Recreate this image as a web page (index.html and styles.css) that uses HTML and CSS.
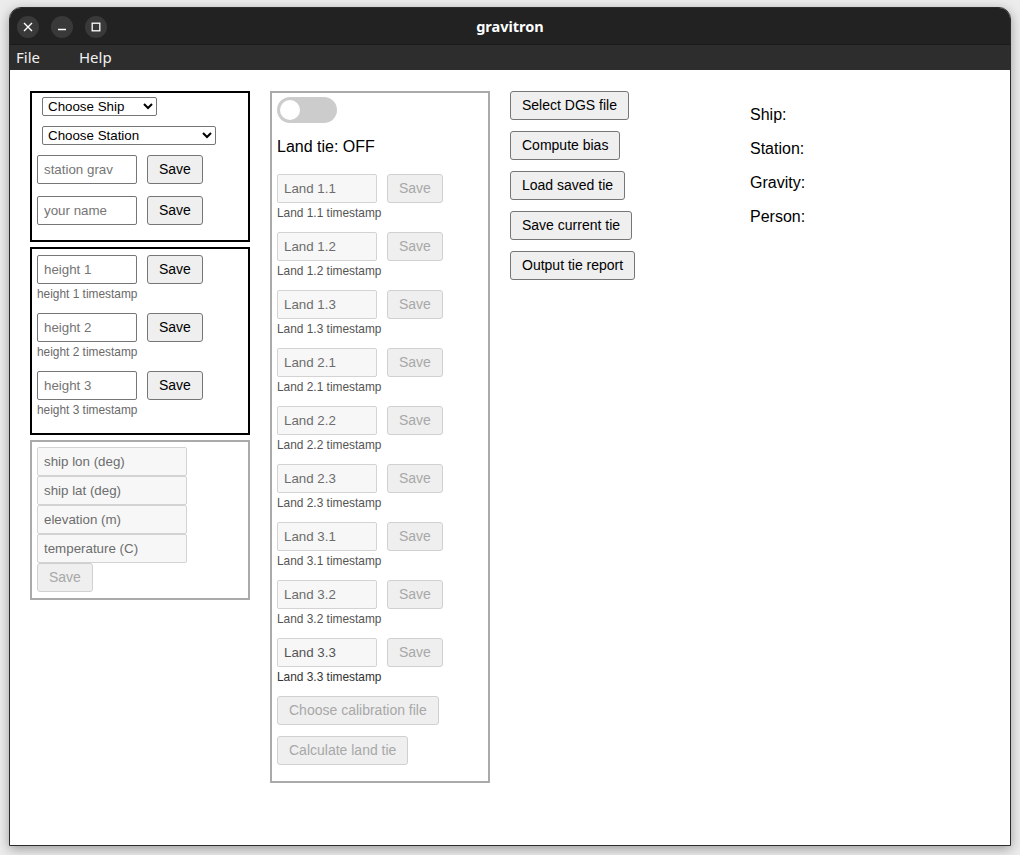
FILE: index.html
```html
<!DOCTYPE html>
<html>
<head>
<meta charset="utf-8">
<title>gravitron</title>
<link rel="stylesheet" href="styles.css">
</head>
<body>
<div class="window">
  <div class="titlebar">
    <div class="wbtns">
      <span class="wbtn"><svg width="10" height="10" viewBox="0 0 10 10"><path d="M1 1L9 9M9 1L1 9" stroke="#fff" stroke-width="1.4" fill="none"/></svg></span>
      <span class="wbtn"><svg width="10" height="10" viewBox="0 0 10 10"><path d="M1 7.5H9" stroke="#fff" stroke-width="1.4" fill="none"/></svg></span>
      <span class="wbtn"><svg width="10" height="10" viewBox="0 0 10 10"><rect x="1.2" y="1.2" width="7.6" height="7.6" stroke="#fff" stroke-width="1.3" fill="none"/></svg></span>
    </div>
    <div class="title">gravitron</div>
    <div></div>
  </div>
  <div class="menubar"><span class="menu">File</span><span class="menu">Help</span></div>
  <div class="content">
    <div class="col left">
      <div class="box dark box1">
        <select class="sel sel-ship"><option>Choose Ship</option></select>
        <select class="sel sel-station"><option>Choose Station</option></select>
        <div class="row"><input class="inp" placeholder="station grav"><button class="btn">Save</button></div>
        <div class="row row-gap"><input class="inp" placeholder="your name"><button class="btn">Save</button></div>
      </div>
      <div class="box dark box2">
        <div class="field"><div class="row"><input class="inp" placeholder="height 1"><button class="btn">Save</button></div><div class="ts">height 1 timestamp</div></div>
        <div class="field"><div class="row"><input class="inp" placeholder="height 2"><button class="btn">Save</button></div><div class="ts">height 2 timestamp</div></div>
        <div class="field"><div class="row"><input class="inp" placeholder="height 3"><button class="btn">Save</button></div><div class="ts">height 3 timestamp</div></div>
      </div>
      <div class="box light box3">
        <input class="inp wide" disabled placeholder="ship lon (deg)">
        <input class="inp wide" disabled placeholder="ship lat (deg)">
        <input class="inp wide" disabled placeholder="elevation (m)">
        <input class="inp wide" disabled placeholder="temperature (C)">
        <div><button class="btn" disabled>Save</button></div>
      </div>
    </div>
    <div class="col mid">
      <div class="box light box-mid">
        <div class="toggle"><span class="knob"></span></div>
        <div class="landtitle">Land tie: OFF</div>
        <div class="land">
          <div class="field"><div class="row"><input class="inp" disabled placeholder="Land 1.1"><button class="btn" disabled>Save</button></div><div class="ts lts">Land 1.1 timestamp</div></div>
          <div class="field"><div class="row"><input class="inp" disabled placeholder="Land 1.2"><button class="btn" disabled>Save</button></div><div class="ts lts">Land 1.2 timestamp</div></div>
          <div class="field"><div class="row"><input class="inp" disabled placeholder="Land 1.3"><button class="btn" disabled>Save</button></div><div class="ts lts">Land 1.3 timestamp</div></div>
          <div class="field"><div class="row"><input class="inp" disabled placeholder="Land 2.1"><button class="btn" disabled>Save</button></div><div class="ts lts">Land 2.1 timestamp</div></div>
          <div class="field"><div class="row"><input class="inp" disabled placeholder="Land 2.2"><button class="btn" disabled>Save</button></div><div class="ts lts">Land 2.2 timestamp</div></div>
          <div class="field"><div class="row"><input class="inp" disabled placeholder="Land 2.3"><button class="btn" disabled>Save</button></div><div class="ts lts">Land 2.3 timestamp</div></div>
          <div class="field"><div class="row"><input class="inp" disabled placeholder="Land 3.1"><button class="btn" disabled>Save</button></div><div class="ts lts">Land 3.1 timestamp</div></div>
          <div class="field"><div class="row"><input class="inp" disabled placeholder="Land 3.2"><button class="btn" disabled>Save</button></div><div class="ts lts">Land 3.2 timestamp</div></div>
          <div class="field"><div class="row"><input class="inp valued" disabled value="Land 3.3"><button class="btn" disabled>Save</button></div><div class="ts lts dark-ts">Land 3.3 timestamp</div></div>
        </div>
        <div class="midbtns">
          <div><button class="btn" disabled>Choose calibration file</button></div>
          <div><button class="btn" disabled>Calculate land tie</button></div>
        </div>
      </div>
    </div>
    <div class="col actions">
      <button class="btn">Select DGS file</button>
      <button class="btn">Compute bias</button>
      <button class="btn">Load saved tie</button>
      <button class="btn">Save current tie</button>
      <button class="btn">Output tie report</button>
    </div>
    <div class="col info">
      <div class="infoline">Ship:</div>
      <div class="infoline">Station:</div>
      <div class="infoline">Gravity:</div>
      <div class="infoline">Person:</div>
    </div>
  </div>
</div>
</body>
</html>
```
FILE: styles.css
```css
* { box-sizing: border-box; }
html, body { margin: 0; padding: 0; }
body {
  background: #ececec;
  width: 1020px;
  height: 855px;
  overflow: hidden;
  padding: 7px 0 0 9px;
  font-family: "Liberation Sans", Arial, sans-serif;
}
.window {
  width: 1002px;
  height: 839px;
  border: 1px solid #2c2c2c;
  border-radius: 12px 12px 0 0;
  overflow: hidden;
  display: flex;
  flex-direction: column;
  background: #fff;
  box-shadow: 0 3px 12px rgba(0,0,0,0.35);
}
.titlebar {
  height: 37px;
  background: #222222;
  border-bottom: 1px solid #1a1a1a;
  display: grid;
  grid-template-columns: 1fr auto 1fr;
  align-items: center;
  flex: none;
}
.wbtns {
  display: flex;
  gap: 12px;
  padding-left: 7px;
  padding-top: 1px;
}
.wbtn {
  width: 22px;
  height: 22px;
  border-radius: 50%;
  background: #393939;
  display: flex;
  align-items: center;
  justify-content: center;
}
.wbtn svg { display: block; }
.title {
  color: #ffffff;
  font-family: "Noto Sans", "DejaVu Sans", sans-serif;
  font-weight: bold;
  font-size: 14.5px;
  padding-bottom: 1px;
}
.menubar {
  height: 25px;
  background: #2d2d2d;
  display: flex;
  align-items: center;
  padding-left: 6px;
  flex: none;
}
.menu {
  color: #f2f2f2;
  font-family: "Noto Sans", "DejaVu Sans", sans-serif;
  font-size: 15px;
  margin-right: 39px;
  padding-bottom: 1px;
}
.content {
  flex: 1;
  background: #fff;
  display: flex;
  align-items: flex-start;
  gap: 20px;
  padding: 21px 0 0 20px;
}
.col { width: 220px; flex: none; }
.left { display: flex; flex-direction: column; gap: 5px; }
.box { border: 2px solid #000; }
.box.dark { border-color: #000; }
.box.light { border-color: #aaaaaa; }
.box1 { padding: 4px 5px 15px 5px; }
.box2 { padding: 6px 5px 16px 5px; }
.box3 { padding: 5px 5px 6px 5px; display: flex; flex-direction: column; }
.sel {
  display: block;
  height: 19px;
  margin: 0 0 10px 5px;
  font-family: "Liberation Sans", Arial, sans-serif;
  font-size: 13.33px;
  color: #000;
  background: #fff;
  border: 1px solid #767676;
  border-radius: 2px;
  padding: 0 0 0 1px;
}
.sel-ship { width: 115px; }
.sel-station { width: 174px; }
.row { display: flex; gap: 10px; align-items: center; }
.row-gap { margin-top: 12px; }
.inp {
  width: 100px;
  height: 29px;
  border: 1px solid #767676;
  border-radius: 2px;
  padding: 1px 6px;
  font-family: "Liberation Sans", Arial, sans-serif;
  font-size: 13.33px;
  color: #000;
  background: #fff;
  outline: none;
}
.inp::placeholder { color: #757575; opacity: 1; }
.inp:disabled {
  background: #f7f7f7;
  border-color: #d3d3d3;
}
.inp:disabled::placeholder { color: #6d6d6d; }
.inp.valued { color: #545454; }
.inp.wide { width: 150px; }
.btn {
  font-family: "Liberation Sans", Arial, sans-serif;
  font-size: 14px;
  line-height: 17px;
  height: 29px;
  padding: 5px 11px;
  border: 1px solid #767676;
  border-radius: 3px;
  background: #efefef;
  color: #000;
  white-space: nowrap;
}
.btn:disabled {
  color: #a8a8a8;
  border-color: #d0d0d0;
  background: #efefef;
}
.field { margin-bottom: 12px; }
.field:last-child { margin-bottom: 0; }
.ts {
  margin-top: 3px;
  font-size: 11.9px;
  line-height: 14px;
  color: #6a6a6a;
  white-space: nowrap;
}
.lts { color: #555; }
.dark-ts { color: #333; }
.box-mid { padding: 4px 5px 16px 5px; }
.toggle {
  width: 60px;
  height: 26px;
  border-radius: 13px;
  background: #cccccc;
  padding: 3px;
  display: flex;
  align-items: center;
}
.knob {
  width: 20px;
  height: 20px;
  border-radius: 50%;
  background: #fff;
  display: block;
}
.landtitle {
  margin: 15px 0 18px 0;
  font-size: 16px;
  line-height: 18px;
  color: #000;
}
.midbtns { margin-top: 12px; display: flex; flex-direction: column; gap: 11px; }
.actions { display: flex; flex-direction: column; align-items: flex-start; gap: 11px; }
.info { padding-top: 15px; display: flex; flex-direction: column; gap: 16px; }
.infoline { font-size: 16px; line-height: 18px; color: #000; }
```
